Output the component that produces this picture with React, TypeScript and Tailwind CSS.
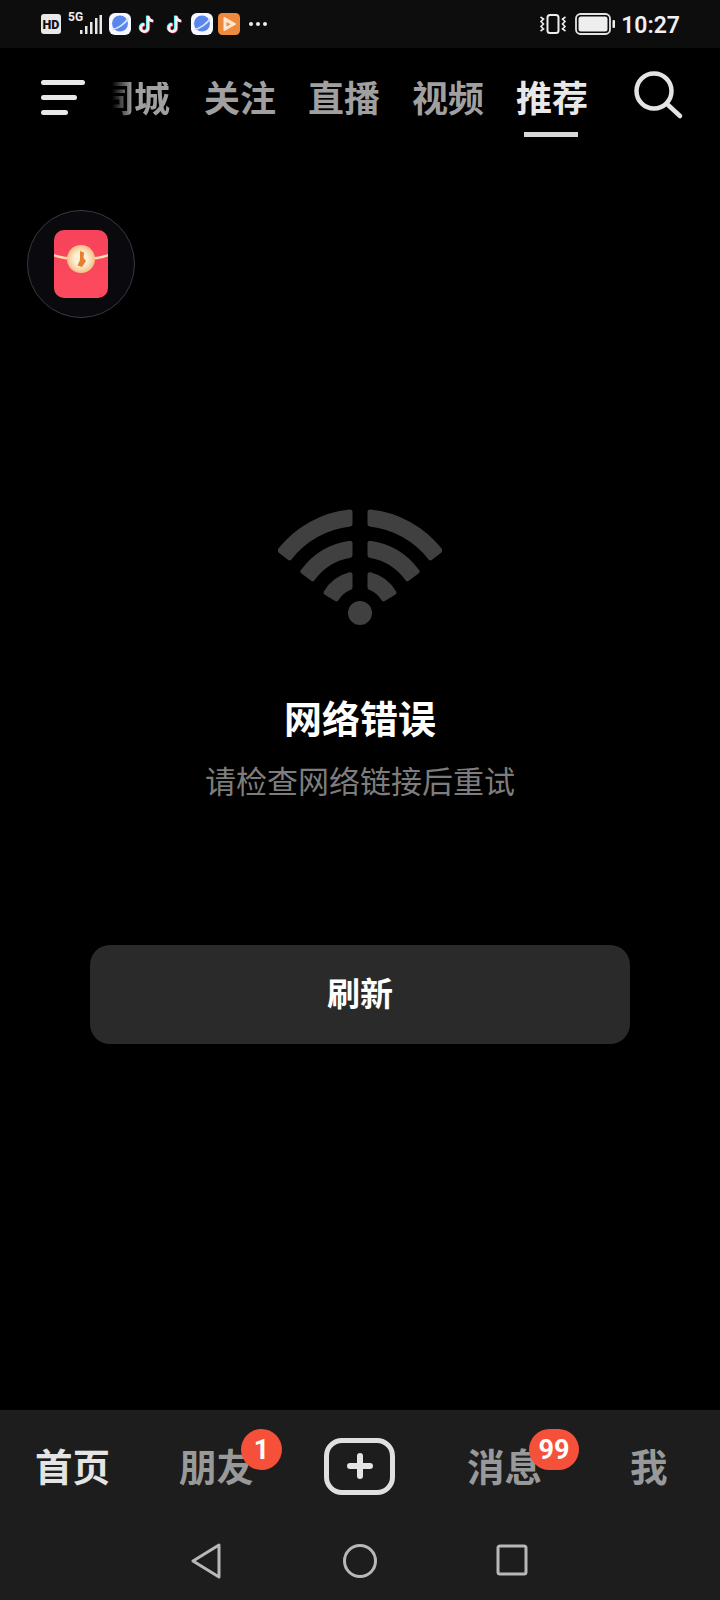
const cjk = "font-['Roboto','Noto_Sans_CJK_SC',sans-serif]";

function HdIcon() {
  return (
    <svg width="20" height="20" viewBox="0 0 20 20">
      <rect width="20" height="20" rx="3" fill="#e8e8e8" />
      <text x="10" y="14.5" textAnchor="middle" fontSize="12.5" fontWeight="900" fill="#111" fontFamily="Roboto, sans-serif">
        HD
      </text>
    </svg>
  );
}

function SignalIcon() {
  return (
    <div className="relative w-[34px] h-[22px]">
      <span className="absolute left-0 top-[-2px] text-[12px] leading-none font-bold text-[#eee] font-['Roboto',sans-serif]">5G</span>
      <svg className="absolute left-0 top-0" width="34" height="22" viewBox="0 0 34 22" fill="#e8e8e8">
        <rect x="12" y="17" width="2.5" height="4" />
        <rect x="17" y="13" width="2.5" height="8" />
        <rect x="22" y="9" width="2.5" height="12" />
        <rect x="27" y="5" width="2.5" height="16" />
        <rect x="31.5" y="2" width="2.5" height="19" />
      </svg>
    </div>
  );
}

function PlanetIcon() {
  return (
    <svg width="22" height="22" viewBox="0 0 22 22">
      <rect width="22" height="22" rx="6" fill="#f6f9ff" />
      <circle cx="11" cy="10.5" r="8" fill="#5b86ec" />
      <path d="M3 16.5 C8 16 16 11 19.5 5" stroke="#d6e4ff" strokeWidth="1.6" fill="none" />
    </svg>
  );
}

function TikTokIcon() {
  const d = "M11 2 V14 A3.6 3.6 0 1 1 7.4 10.4 M11 2 C11.5 5 13.5 6.6 16 7";
  return (
    <svg width="18" height="20" viewBox="0 0 18 20" fill="none" strokeWidth="2.6">
      <path d={d} stroke="#25f4ee" transform="translate(-0.8 -0.5)" />
      <path d={d} stroke="#fe2c55" transform="translate(0.8 0.5)" />
      <path d={d} stroke="#f3f3f3" />
    </svg>
  );
}

function PlayAppIcon() {
  return (
    <svg width="22" height="22" viewBox="0 0 22 22">
      <rect width="22" height="22" rx="4.5" fill="#ee8a3c" />
      <path d="M6.5 5 L17 11 L6.5 17 Z" fill="#fde6d0" stroke="#fde6d0" strokeWidth="2" strokeLinejoin="round" />
      <path d="M8.5 9 L12.5 11.2 L8.5 13.5 Z" fill="#ee8a3c" />
    </svg>
  );
}

function StatusBar() {
  return (
    <div className="h-12 shrink-0 bg-[#0d0d0e] flex items-center pl-[41px] pr-[40px]">
      <HdIcon />
      <div className="ml-[7px]">
        <SignalIcon />
      </div>
      <div className="ml-[7px]">
        <PlanetIcon />
      </div>
      <div className="ml-[6px]">
        <TikTokIcon />
      </div>
      <div className="ml-[10px]">
        <TikTokIcon />
      </div>
      <div className="ml-[8px]">
        <PlanetIcon />
      </div>
      <div className="ml-[5px]">
        <PlayAppIcon />
      </div>
      <div className="ml-[9px] flex gap-[3px]">
        <span className="w-[4px] h-[4px] rounded-full bg-[#eee]" />
        <span className="w-[4px] h-[4px] rounded-full bg-[#eee]" />
        <span className="w-[4px] h-[4px] rounded-full bg-[#eee]" />
      </div>
      <div className="ml-auto flex items-center">
        <svg width="28" height="22" viewBox="0 0 28 22" fill="none" stroke="#eee">
          <rect x="8.5" y="2" width="11" height="18" rx="2.5" strokeWidth="2" />
          <path d="M1.5 4 L4.5 6 L2 8.5 L4.5 11 L2 13.5 L4.5 16 L1.5 18" strokeWidth="1.6" />
          <path d="M26.5 4 L23.5 6 L26 8.5 L23.5 11 L26 13.5 L23.5 16 L26.5 18" strokeWidth="1.6" />
        </svg>
        <svg className="ml-[8px]" width="41" height="22" viewBox="0 0 41 22" fill="none">
          <rect x="1" y="1" width="34" height="20" rx="4.5" stroke="#e4e4e4" strokeWidth="1.8" />
          <rect x="3.5" y="3.5" width="29" height="15" rx="2.5" fill="#eee" />
          <rect x="37.5" y="7" width="2.5" height="8" rx="1" fill="#eee" />
        </svg>
        <span className="ml-[5px] mt-[2px] text-[23px] leading-none font-semibold text-[#f0f0f0] font-['Roboto',sans-serif]">10:27</span>
      </div>
    </div>
  );
}

function TopNav() {
  return (
    <div className={`h-[96px] shrink-0 flex items-center pt-[8px] ${cjk}`}>
      <div className="w-[112px] pl-[41px] mb-[6px] flex flex-col gap-[10px] shrink-0">
        <span className="w-[44px] h-[5px] rounded-full bg-[#e8e8e8]" />
        <span className="w-[36px] h-[5px] rounded-full bg-[#e8e8e8]" />
        <span className="w-[27px] h-[5px] rounded-full bg-[#e8e8e8]" />
      </div>
      <div className="w-[58px] overflow-hidden flex justify-end [mask-image:linear-gradient(to_right,transparent,black_35%)]">
        <span className="text-[36px] leading-none font-bold text-[#a0a0a0] whitespace-nowrap">同城</span>
      </div>
      <div className="ml-[34px] flex gap-[32px] text-[36px] leading-none font-bold text-[#a0a0a0]">
        <span>关注</span>
        <span>直播</span>
        <span>视频</span>
        <div className="relative text-[#e8e8e8]">
          <span>推荐</span>
          <span className="absolute left-[8px] top-[50px] w-[54px] h-[5px] bg-[#d8d8d8]" />
        </div>
      </div>
      <svg className="ml-[46px] mb-[8px]" width="50" height="50" viewBox="0 0 50 50" fill="none" stroke="#e4e4e4" strokeWidth="4.5" strokeLinecap="round">
        <circle cx="20" cy="20" r="17.5" />
        <path d="M33 33 L46 45" />
      </svg>
    </div>
  );
}

function RedPacket() {
  return (
    <div className="w-[108px] h-[108px] rounded-full border border-[#3a3a3e] bg-[#0a0a0e] flex items-center justify-center">
      <svg width="54" height="68" viewBox="0 0 54 68">
        <defs>
          <linearGradient id="pk" x1="0" y1="0" x2="0" y2="1">
            <stop offset="0" stopColor="#f6435a" />
            <stop offset="1" stopColor="#fd4a5e" />
          </linearGradient>
          <radialGradient id="coin">
            <stop offset="0.45" stopColor="#fff0d8" />
            <stop offset="1" stopColor="#f4c083" />
          </radialGradient>
        </defs>
        <rect width="54" height="68" rx="10" fill="url(#pk)" />
        <path d="M0 25 C10 30 44 30 54 25" stroke="#ffd9b0" strokeWidth="2.5" fill="none" />
        <circle cx="27" cy="29" r="14" fill="url(#coin)" />
        <path d="M26 21 L30 22.5 L29.5 28 L32 31 L28 37 L23.5 35.5 L26 30 Z" fill="#e87f2a" />
      </svg>
    </div>
  );
}

// one side of a wifi band, centred on the dot at (82, 104), ends cut along the radius
function band(rOuter: number, rInner: number, deg: number) {
  const a = (deg * Math.PI) / 180;
  const gap = 10;
  const yAt = (r: number) => 104 - Math.sqrt(r * r - gap * gap);
  const ox = 82 - rOuter * Math.cos(a);
  const oy = 104 - rOuter * Math.sin(a);
  const ix = 82 - rInner * Math.cos(a);
  const iy = 104 - rInner * Math.sin(a);
  return `M${82 - gap} ${yAt(rOuter)} A${rOuter} ${rOuter} 0 0 0 ${ox} ${oy} L${ix} ${iy} A${rInner} ${rInner} 0 0 1 ${82 - gap} ${yAt(rInner)} Z`;
}

function WifiIcon() {
  const bands = [band(101.5, 89.5, 38), band(70.5, 58.5, 36), band(39.5, 27.5, 31)];
  return (
    <svg width="164" height="118" viewBox="0 0 164 118" fill="#404040" stroke="#404040" strokeWidth="5" strokeLinejoin="round">
      {bands.map((d) => (
        <g key={d}>
          <path d={d} />
          <path d={d} transform="matrix(-1 0 0 1 164 0)" />
        </g>
      ))}
      <circle cx="82" cy="104" r="9.5" />
    </svg>
  );
}

function Tab({ label, active, className }: { label: string; active?: boolean; className: string }) {
  return (
    <span className={`pt-[6px] text-[37.5px] leading-none font-bold ${active ? "text-[#e4e4e4]" : "text-[#999999]"} ${className}`}>
      {label}
    </span>
  );
}

function BottomBar() {
  return (
    <div className={`mt-auto h-[190px] shrink-0 bg-[#1d1d1d] flex flex-col ${cjk}`}>
      <div className="h-[112px] flex items-center">
        <Tab label="首页" active className="ml-[35px]" />
        <div className="relative ml-[69px]">
          <Tab label="朋友" className="block" />
          <span className="absolute left-[62px] top-[-15px] w-[41px] h-[41px] rounded-full bg-[#f5513a] text-white text-[27px] font-bold flex items-center justify-center font-['Roboto',sans-serif]">
            1
          </span>
        </div>
        <div className="ml-[70px] w-[71px] h-[57px] rounded-[18px] border-[5px] border-[#e0e0e0] flex items-center justify-center">
          <svg width="26" height="26" viewBox="0 0 26 26" stroke="#e4e4e4" strokeWidth="6" strokeLinecap="round">
            <path d="M13 3 V23 M3 13 H23" />
          </svg>
        </div>
        <div className="relative ml-[72px]">
          <Tab label="消息" className="block" />
          <span className="absolute left-[62px] top-[-15px] w-[50px] h-[41px] rounded-full bg-[#f5513a] text-white text-[27px] font-bold flex items-center justify-center font-['Roboto',sans-serif]">
            99
          </span>
        </div>
        <Tab label="我" className="ml-[88px]" />
      </div>
      <div className="flex-1 flex items-start pt-[21px] pl-[191px]">
        <svg width="30" height="36" viewBox="0 0 30 36" fill="none" stroke="#b8b8b8" strokeWidth="3" strokeLinejoin="round">
          <path d="M28 2 V34 L2 18 Z" />
        </svg>
        <svg className="ml-[122px]" width="34" height="36" viewBox="0 0 34 36" fill="none" stroke="#b8b8b8" strokeWidth="3">
          <circle cx="17" cy="18" r="15.5" />
        </svg>
        <svg className="ml-[119px]" width="32" height="36" viewBox="0 0 32 36" fill="none" stroke="#b8b8b8" strokeWidth="3">
          <rect x="2" y="3" width="28" height="28" rx="2" />
        </svg>
      </div>
    </div>
  );
}

export default function App() {
  return (
    <div className={`w-[720px] h-[1600px] bg-black flex flex-col overflow-hidden ${cjk}`}>
      <StatusBar />
      <TopNav />
      <div className="pl-[27px] pt-[66px]">
        <RedPacket />
      </div>
      <div className="flex flex-col items-center pt-[191px]">
        <WifiIcon />
        <h1 className="mt-[71px] text-[38px] leading-[44px] font-bold text-white">网络错误</h1>
        <p className="mt-[19px] text-[31px] leading-[44px] text-[#7d7d7d]">请检查网络链接后重试</p>
        <button className="mt-[140px] w-[540px] h-[99px] rounded-[20px] bg-[#2a2a2a] text-white text-[33px] font-bold">
          刷新
        </button>
      </div>
      <BottomBar />
    </div>
  );
}
